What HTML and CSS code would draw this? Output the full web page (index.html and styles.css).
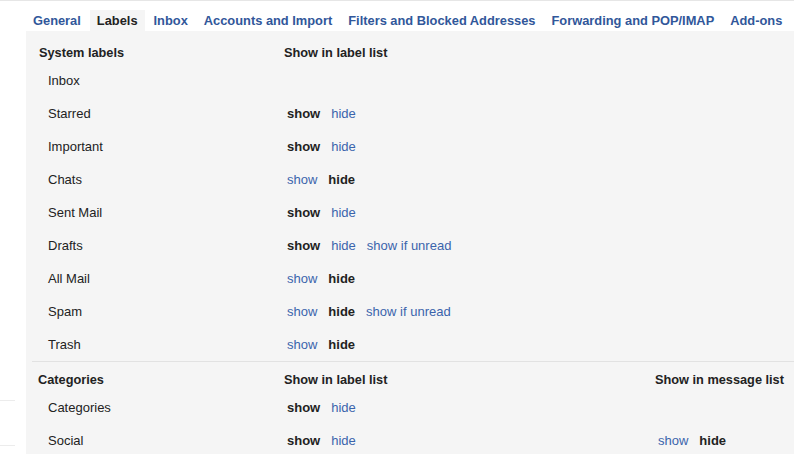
FILE: index.html
```html
<!DOCTYPE html>
<html>
<head>
<meta charset="utf-8">
<link rel="stylesheet" href="styles.css">
</head>
<body>
<div class="page">
  <aside class="side">
    <div class="side-line first"></div>
    <div class="side-line"></div>
  </aside>
  <main class="main">
    <nav class="tabs">
      <a class="tab">General</a>
      <a class="tab active">Labels</a>
      <a class="tab">Inbox</a>
      <a class="tab">Accounts and Import</a>
      <a class="tab">Filters and Blocked Addresses</a>
      <a class="tab">Forwarding and POP/IMAP</a>
      <a class="tab">Add-ons</a>
    </nav>
    <section class="panel">
      <div class="section">
        <div class="row head">
          <div class="c1">System labels</div>
          <div class="c2">Show in label list</div>
          <div class="c3"></div>
        </div>
        <div class="row"><div class="c1">Inbox</div><div class="c2"></div><div class="c3"></div></div>
        <div class="row"><div class="c1">Starred</div><div class="c2"><b>show</b><a>hide</a></div><div class="c3"></div></div>
        <div class="row"><div class="c1">Important</div><div class="c2"><b>show</b><a>hide</a></div><div class="c3"></div></div>
        <div class="row"><div class="c1">Chats</div><div class="c2"><a>show</a><b>hide</b></div><div class="c3"></div></div>
        <div class="row"><div class="c1">Sent Mail</div><div class="c2"><b>show</b><a>hide</a></div><div class="c3"></div></div>
        <div class="row"><div class="c1">Drafts</div><div class="c2"><b>show</b><a>hide</a><a>show if unread</a></div><div class="c3"></div></div>
        <div class="row"><div class="c1">All Mail</div><div class="c2"><a>show</a><b>hide</b></div><div class="c3"></div></div>
        <div class="row"><div class="c1">Spam</div><div class="c2"><a>show</a><b>hide</b><a>show if unread</a></div><div class="c3"></div></div>
        <div class="row"><div class="c1">Trash</div><div class="c2"><a>show</a><b>hide</b></div><div class="c3"></div></div>
      </div>
      <div class="section second">
        <div class="row head">
          <div class="c1">Categories</div>
          <div class="c2">Show in label list</div>
          <div class="c3">Show in message list</div>
        </div>
        <div class="row"><div class="c1">Categories</div><div class="c2"><b>show</b><a>hide</a></div><div class="c3"></div></div>
        <div class="row"><div class="c1">Social</div><div class="c2"><b>show</b><a>hide</a></div><div class="c3"><a>show</a><b>hide</b></div></div>
      </div>
    </section>
  </main>
</div>
</body>
</html>
```

FILE: styles.css
```css
* { box-sizing: border-box; }
html, body { margin: 0; padding: 0; }
body {
  font-family: Arial, "Liberation Sans", sans-serif;
  font-size: 13px;
  color: #222;
  background: #fff;
  overflow: hidden;
}
.page {
  display: flex;
  height: 454px;
  border-top: 1px solid #e6e6e6;
}
.side {
  width: 26px;
  flex: none;
  display: flex;
  flex-direction: column;
}
.side-line {
  width: 15px;
  height: 1px;
  background: #ececec;
  margin-top: 44px;
}
.side-line.first { margin-top: 399px; }
.main {
  flex: 1;
  display: flex;
  flex-direction: column;
}
.tabs {
  display: flex;
  padding-top: 9px;
  gap: 2px;
  height: 30px;
}
.tab {
  display: block;
  padding: 0 7px;
  height: 21px;
  line-height: 21px;
  font-size: 12.85px;
  font-weight: bold;
  color: #31579a;
  white-space: nowrap;
}
.tab.active {
  background: #f5f5f5;
  color: #222;
}
.panel {
  flex: 1;
  background: #f5f5f5;
  padding-top: 9px;
}
.section { padding-left: 13px; }
.section.second {
  margin-left: 6px;
  padding-left: 7px;
  border-top: 1px solid #e2e2e2;
  padding-top: 5px;
}
.section.second .head .c1 { margin-left: -1px; margin-right: 1px; }
.row {
  display: flex;
  height: 33px;
  align-items: center;
}
.row.head {
  height: 24px;
  font-weight: bold;
  font-size: 12.75px;
}
.c1 { width: 245px; flex: none; padding-left: 9px; }
.c2 { width: 371px; flex: none; padding-left: 3px; display: flex; gap: 11px; }
.c3 { flex: 1; padding-left: 3px; display: flex; gap: 11px; }
.head .c1, .head .c2, .head .c3 { padding-left: 0; }
.c2 b, .c3 b { font-weight: bold; color: #222; }
.c2 a, .c3 a { color: #3b64ac; }
```
